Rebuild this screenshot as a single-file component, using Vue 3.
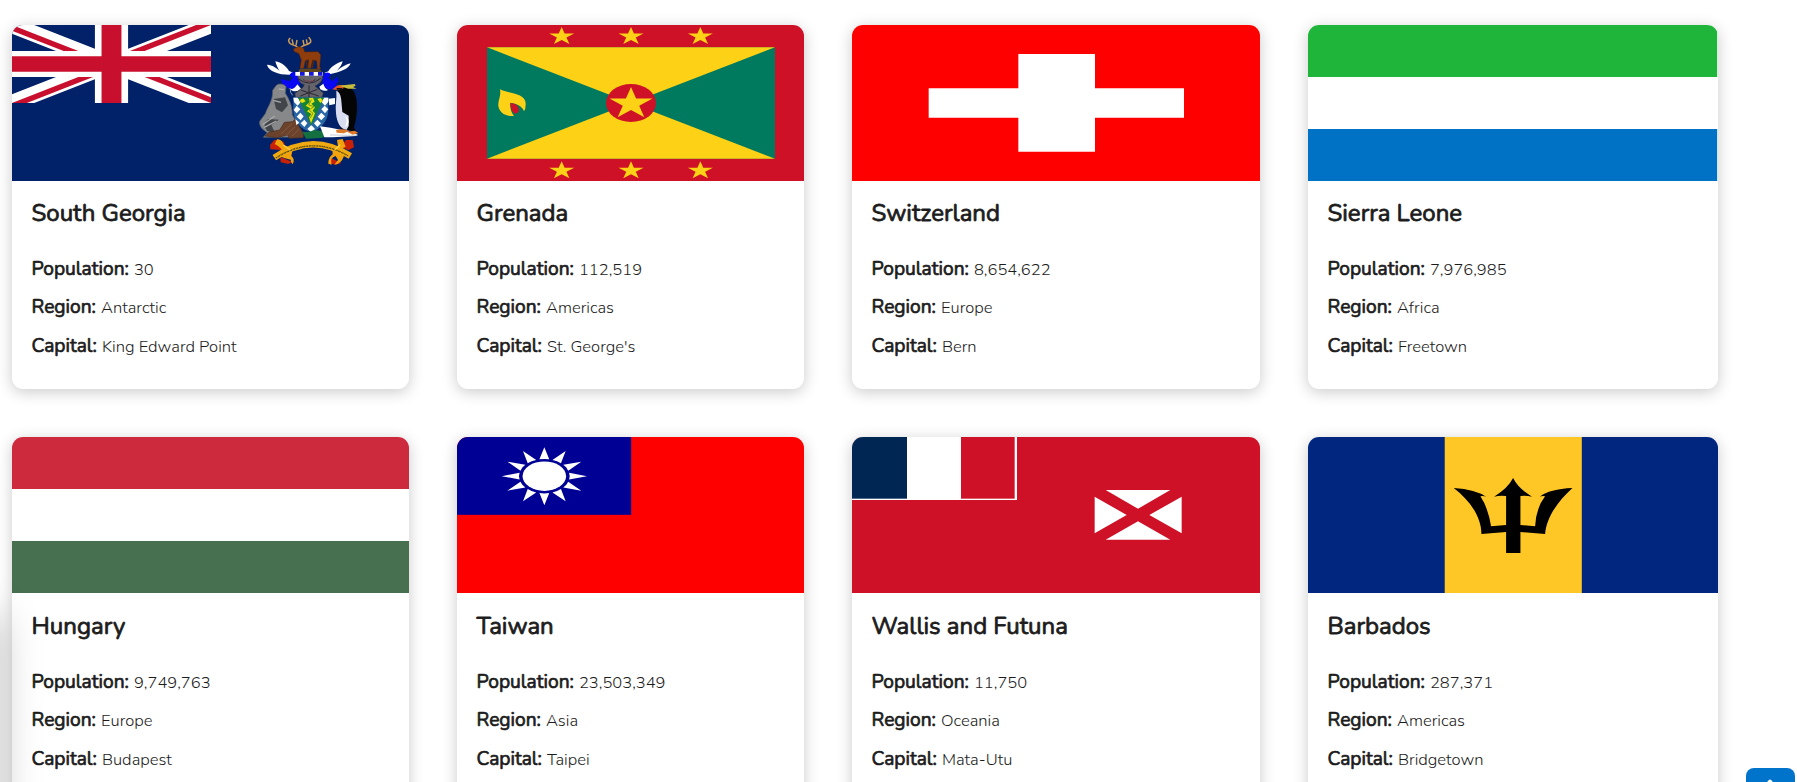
<script setup>
const countries = [
  { id: 'gs', name: 'South Georgia', population: '30', region: 'Antarctic', capital: 'King Edward Point' },
  { id: 'gd', name: 'Grenada', population: '112,519', region: 'Americas', capital: "St. George's" },
  { id: 'ch', name: 'Switzerland', population: '8,654,622', region: 'Europe', capital: 'Bern' },
  { id: 'sl', name: 'Sierra Leone', population: '7,976,985', region: 'Africa', capital: 'Freetown' },
  { id: 'hu', name: 'Hungary', population: '9,749,763', region: 'Europe', capital: 'Budapest' },
  { id: 'tw', name: 'Taiwan', population: '23,503,349', region: 'Asia', capital: 'Taipei' },
  { id: 'wf', name: 'Wallis and Futuna', population: '11,750', region: 'Oceania', capital: 'Mata-Utu' },
  { id: 'bb', name: 'Barbados', population: '287,371', region: 'Americas', capital: 'Bridgetown' },
]

const boxes = {
  gs: '36 45 1191 468',
  gd: '51 45 1041 468',
  ch: '36 45 1224 468',
  sl: '0 0 3 3',
  hu: '0 0 3 3',
  tw: '51 51 1041 468',
  wf: '36 51 1224 468',
  bb: '54 51 1227 468',
}

const star = '0,-1 .225,-.309 .951,-.309 .363,.118 .588,.809 0,.382 -.588,.809 -.363,.118 -.951,-.309 -.225,-.309'
const smallStars = [[365, 79], [573, 79], [781, 79], [365, 482], [573, 482], [781, 482]]
const rays = Array.from({ length: 12 }, (_, i) => i * 30)
</script>

<template>
  <main class="page">
    <section class="grid">
      <article v-for="c in countries" :key="c.id" class="card">
        <svg class="flag" :viewBox="boxes[c.id]" preserveAspectRatio="none" aria-hidden="true">
          <template v-if="c.id === 'gs'">
            <defs>
              <clipPath id="canton"><path d="M0 0H60V30H0z" /></clipPath>
              <clipPath id="saltire"><path d="M30 15H60V30zM30 15V30H0zM30 15H0V0zM30 15V0H60z" /></clipPath>
            </defs>
            <rect x="30" y="40" width="1210" height="480" fill="#012169" />
            <g transform="translate(36 45) scale(9.95 7.8)" clip-path="url(#canton)">
              <path d="M0 0L60 30M60 0L0 30" stroke="#fff" stroke-width="6" />
              <path d="M0 0L60 30M60 0L0 30" stroke="#c8102e" stroke-width="4" clip-path="url(#saltire)" />
              <path d="M30 0V30M0 15H60" stroke="#fff" stroke-width="10" />
              <path d="M30 0V30M0 15H60" stroke="#c8102e" stroke-width="6" />
            </g>
            <g transform="translate(720 30)" fill="none" stroke-linejoin="round">
              <!-- stag crest -->
              <path d="M176 84C166 74 150 76 147 66C144 60 148 56 151 54M160 74L156 58M168 76L171 60M180 84C192 72 206 76 212 66C214 60 210 56 206 52M192 76L189 60M202 73L199 58" stroke="#c99a55" stroke-width="4.5" />
              <path d="M160 87L175 80L190 84L194 96L234 95L242 104L239 140L242 147H232L230 122L218 120L212 145H204L206 119L196 122L191 145H180L184 120L177 101L162 94z" fill="#8f3d0c" stroke="#5c2605" stroke-width="1.5" />
              <path d="M222 120L216 144M199 122L202 144" stroke="#5c2605" stroke-width="4" />
              <!-- mantling and plumes -->
              <path d="M81 134C94 133 112 145 119 153C112 143 108 132 106 124C124 127 140 140 147 153L160 158Q158 166 148 164C130 164 118 162 101 155C91 150 83 143 81 134z" fill="#fff" />
              <path d="M332 130C319 132 304 142 291 152C300 142 307 132 308 124C288 130 272 142 265 154L254 158Q256 166 268 163C280 161 300 156 315 148C324 143 329 137 332 130z" fill="#fff" />
              <path d="M124 176C123 184 125 191 135 197C145 207 160 210 173 203L181 190L170 160C164 153 153 156 148 166L158 174L148 184z" fill="#0808f2" />
              <path d="M290 170C296 180 296 188 287 191C296 199 294 205 284 207C269 211 253 206 247 198L250 165C257 154 268 156 273 164L265 174L278 184z" fill="#0808f2" />
              <path d="M145 205Q161 213 172 193L183 206Q171 217 157 212zM238 200L250 191Q254 205 264 210Q254 216 241 208z" fill="#fff" />
              <!-- helm -->
              <path d="M173 158L181 146L239 149L249 160L247 176C243 188 233 194 225 198L250 219L246 232H166L165 220L188 203L193 194C181 191 172 180 173 158z" fill="#65636b" stroke="#36353d" stroke-width="2" />
              <path d="M178 151L186 146H234L244 153L239 158H183z" fill="#5e451d" />
              <path d="M166 156H248V167H166z" fill="#fff" />
              <path d="M180 156H194V167H180zM207 156H221V167H207zM234 156H247V167H234z" fill="#1717d8" />
              <path d="M174 176Q209 203 242 175M190 179Q209 190 226 179M207 196V231M184 211L236 228M232 208L181 228" stroke="#292831" stroke-width="3" />
              <path d="M192 179Q207 189 222 179" stroke="#b55668" stroke-width="2" />
              <!-- seal -->
              <path d="M98 211L109 196C117 190 132 191 138 200L136 220C148 239 157 257 157 284L184 333L187 351L70 352L82 338C67 329 57 319 59 304L76 281C83 259 99 244 98 211z" fill="#86888a" stroke="#5c6268" stroke-width="2" />
              <path d="M101 237L135 232L144 256L126 277L108 267zM85 297Q64 313 82 333L105 338L94 315L117 299z" fill="#42464a" />
              <path d="M100 241L123 247M116 207L133 209M68 314L104 288M73 322L109 303" stroke="#aaa" stroke-width="4" />
              <path d="M75 348L88 336L119 330L133 307L157 305L165 298L172 311L190 340V353L148 355L143 345L111 353z" fill="#6b432c" stroke="#4d2e20" stroke-width="2" />
              <path d="M123 342L156 311M137 347L165 321M156 348L178 327" stroke="#936347" stroke-width="2" />
              <path d="M151 205Q149 219 158 226" stroke="#8aa3b2" stroke-width="3" />
              <!-- shield -->
              <path d="M160 232H265V270C264 303 244 328 213 336C182 329 161 304 160 270z" fill="#2866a4" />
              <path d="M160 233H173L183 245L173 257L162 246zM252 233H265V245L255 257L244 246zM170 257L181 268L170 280L161 270zM254 257L265 268L255 280L244 268zM181 278L191 289L182 301L170 290zM244 278L255 289L244 301L233 290zM166 297L178 308L169 315zM193 299L202 310L193 321L182 310zM232 299L243 310L232 321L222 310zM214 315L225 327L213 336L202 327z" fill="#fff" />
              <path d="M174 233H252L214 317z" fill="#158331" />
              <path d="M180 240L189 235L197 244L187 249L181 246zM232 237L242 234L249 242L241 249zM207 234L219 233L224 245L214 251L225 262L218 272L225 280L213 310L207 292L214 282L201 274L211 265L197 257L209 247z" fill="#e5df13" />
              <path d="M214 239L206 255L222 260L207 270L219 280L210 295" stroke="#719d18" stroke-width="3" />
              <!-- penguin -->
              <path d="M296 206C307 194 331 196 343 217C354 241 354 282 342 322L351 343L330 331L304 327C289 301 284 235 296 206z" fill="#050506" />
              <path d="M289 212C297 215 303 225 304 242L307 276L326 287L326 318L320 329C302 330 290 307 288 280C285 256 291 235 289 212z" fill="#d9ddf2" />
              <path d="M315 288C325 292 329 306 323 315L315 321Q325 301 315 288z" fill="#fff" />
              <path d="M277 208L293 196H314L309 206L293 211z" fill="#e4561e" />
              <path d="M296 197L344 192L347 197L339 201L350 206L325 206z" fill="#c6bd3a" />
              <path d="M266 236L285 234V252L268 256z" fill="#fff" />
              <path d="M290 204H307V209H290z" fill="#111" />
              <!-- ground -->
              <path d="M187 335L204 336L225 330L246 333L256 350L244 354L198 356z" fill="#14713f" />
              <path d="M240 319L272 323L305 330L328 335L353 344L348 348L278 352H253z" fill="#fff" />
              <path d="M288 330Q309 324 328 332L312 340L290 338zM321 335L344 332L355 339L338 344z" fill="#df7b28" />
              <path d="M270 345L353 346" stroke="#aab4bc" stroke-width="2" />
              <!-- motto ribbon -->
              <path d="M103 359L131 365L139 387L122 390L91 388L90 375zM318 360L338 360L342 382L326 390L302 382zM121 411L157 426L145 432L122 427zM273 414L304 429L287 434L270 430z" fill="#c92008" />
              <path d="M111 358Q126 358 131 374L158 387L154 408Q166 417 158 433Q152 428 152 419Q136 417 117 407L127 390Q113 375 104 373zM291 360L308 357L317 380L303 387L312 408Q303 433 283 434L294 420L287 408Q268 413 275 434L265 431Q265 412 278 403L277 386L295 388z" fill="#f2a20a" />
              <path d="M103 413Q215 335 331 408" stroke="#efaa12" stroke-width="19" />
              <path d="M108 414Q215 344 325 408" stroke="#50450c" stroke-width="4" stroke-dasharray="4 2 3 1" />
              <path d="M129 375L151 390M301 374L285 389" stroke="#ffd249" stroke-width="4" />
            </g>
          </template>

          <template v-else-if="c.id === 'gd'">
            <rect x="50" y="40" width="1050" height="480" fill="#ce1126" />
            <rect x="141" y="112" width="864" height="334" fill="#007a5e" />
            <path d="M141 112H1005L141 446H1005z" fill="#fcd116" />
            <ellipse cx="573" cy="279" rx="75" ry="57" fill="#ce1126" />
            <polygon :points="star" transform="translate(573 281) scale(68 50)" fill="#fcd116" />
            <polygon v-for="(s, i) in smallStars" :key="i" :points="star" :transform="`translate(${s[0]} ${s[1]}) scale(39.5 28)`" fill="#fcd116" />
            <path d="M180 238C203 251 260 248 257 284Q257 297 252 304C249 290 226 278 211 279Q209 302 222 318C195 320 178 307 175 288C173 271 184 259 180 238z" fill="#fcd116" />
            <path d="M211 279C227 280 240 290 236 305L226 312Q211 304 211 279z" fill="#ce1126" />
          </template>

          <template v-else-if="c.id === 'ch'">
            <rect x="30" y="40" width="1240" height="480" fill="#f00" />
            <path d="M535 132H765V235H1032V323H765V425H535V323H266V235H535z" fill="#fff" />
          </template>

          <template v-else-if="c.id === 'sl'">
            <rect width="3" height="3" fill="#fff" />
            <rect width="3" height="1" fill="#1eb53a" />
            <rect y="2" width="3" height="1" fill="#0072c6" />
          </template>

          <template v-else-if="c.id === 'hu'">
            <rect width="3" height="3" fill="#fff" />
            <rect width="3" height="1" fill="#cd2a3e" />
            <rect y="2" width="3" height="1" fill="#477050" />
          </template>

          <template v-else-if="c.id === 'tw'">
            <rect x="50" y="45" width="1050" height="480" fill="#f00" />
            <rect x="50" y="45" width="523.5" height="239.5" fill="#000095" />
            <g transform="translate(313 168.5) scale(128 87)" fill="#fff">
              <circle r=".51" />
              <polygon v-for="r in rays" :key="r" points="0,-1 .115,-.58 0,-.595 -.115,-.58" :transform="`rotate(${r})`" />
            </g>
          </template>

          <template v-else-if="c.id === 'wf'">
            <rect x="30" y="45" width="1240" height="480" fill="#ce1126" />
            <rect x="30" y="45" width="501" height="195" fill="#fff" />
            <rect x="30" y="45" width="171" height="191" fill="#002654" />
            <rect x="363" y="45" width="161" height="191" fill="#ce1126" />
            <path d="M797 210H991L894 266zM797 359H991L894 304zM764 230L860 285L764 340zM1025 230L928 285L1025 340z" fill="#fff" />
          </template>

          <template v-else>
            <rect x="50" y="45" width="1240" height="480" fill="#00267f" />
            <rect x="464" y="45" width="411" height="480" fill="#ffc726" />
            <path d="M669 174Q684 205 726 230Q708 226 691 228V315L735 319Q738 263 765 229Q757 226 749 230Q778 207 847 204C803 244 769 292 765 342L691 336V399H648V336L574 342C574 291 540 242 491 204Q557 208 589 231Q580 226 571 229Q594 263 603 319L648 315V228Q630 225 612 230Q654 204 669 174z" fill="#000" />
          </template>
        </svg>

        <div class="body">
          <h2 class="name">{{ c.name }}</h2>
          <p class="row"><strong class="label">Population:</strong> <span class="value">{{ c.population }}</span></p>
          <p class="row"><strong class="label">Region:</strong> <span class="value">{{ c.region }}</span></p>
          <p class="row last"><strong class="label">Capital:</strong> <span class="value">{{ c.capital }}</span></p>
        </div>
      </article>
    </section>
    <div class="edge-shadow"></div>
    <button class="to-top" aria-label="Back to top">
      <svg width="18" height="12" viewBox="0 0 18 12" fill="none" stroke="#fff" stroke-width="3" stroke-linecap="round" stroke-linejoin="round">
        <path d="M2 10L9 2L16 10" />
      </svg>
    </button>
  </main>
</template>

<style>
body {
  background: #fff;
  overflow: hidden;
}
</style>

<style scoped>
.page {
  position: relative;
  height: 782px;
  overflow: hidden;
  font-family: Nunito, Lato, "Open Sans", sans-serif;
  color: #1c1c1c;
}
.grid {
  display: grid;
  grid-template-columns: 397px 347px 408px 409.2px;
  grid-auto-rows: 364.4px;
  gap: 48px;
  padding: 25px 0 0 12.45px;
}
.card {
  border-radius: 11px;
  overflow: hidden;
  background: #fff;
  box-shadow: 0 3px 15px rgba(0, 0, 0, 0.21);
}
.flag {
  display: block;
  width: 100%;
  height: 156px;
}
.body {
  padding: 15.3px 19.1px;
}
.name {
  margin: 0 0 20px;
  font-size: 24px;
  line-height: 34px;
  font-weight: 400;
  -webkit-text-stroke: 0.8px currentColor;
}
.row {
  display: flex;
  align-items: baseline;
  gap: 5px;
  margin: 0;
  line-height: 38px;
  height: 38px;
}
.last {
  margin-top: 1px;
}
.label {
  font-size: 19.2px;
  font-weight: 400;
  -webkit-text-stroke: 0.7px currentColor;
}
.value {
  font-size: 16.55px;
  font-weight: 300;
  color: #1c1c1c;
}
.edge-shadow {
  position: absolute;
  left: -40px;
  top: 617px;
  width: 40px;
  height: 300px;
  box-shadow: 0 0 40px rgba(0, 0, 0, 0.25);
}
.to-top {
  position: absolute;
  right: 2.3px;
  bottom: -34px;
  width: 48.5px;
  height: 48px;
  display: flex;
  justify-content: center;
  padding: 11px 0 0;
  border: 0;
  border-radius: 8px;
  background: #0073cb;
}
</style>
